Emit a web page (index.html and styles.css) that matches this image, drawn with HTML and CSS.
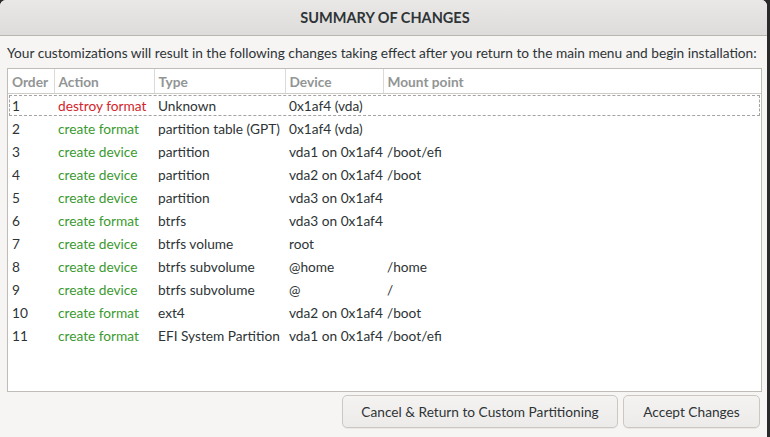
FILE: index.html
```html
<!DOCTYPE html>
<html>
<head>
<meta charset="utf-8">
<link rel="stylesheet" href="styles.css">
</head>
<body>
<div class="dialog">
  <div class="titlebar">SUMMARY OF CHANGES</div>
  <div class="content">
    <p class="intro">Your customizations will result in the following changes taking effect after you return to the main menu and begin installation:</p>
    <div class="frame">
      <table class="changes">
        <colgroup>
          <col class="c-order"><col class="c-action"><col class="c-type"><col class="c-device"><col>
        </colgroup>
        <thead>
          <tr><th>Order</th><th>Action</th><th>Type</th><th>Device</th><th class="last">Mount point</th></tr>
        </thead>
        <tbody>
          <tr class="focused"><td>1</td><td class="destroy">destroy format</td><td>Unknown</td><td>0x1af4 (vda)</td><td></td></tr>
          <tr><td>2</td><td class="create">create format</td><td>partition table (GPT)</td><td>0x1af4 (vda)</td><td></td></tr>
          <tr><td>3</td><td class="create">create device</td><td>partition</td><td>vda1 on 0x1af4</td><td>/boot/efi</td></tr>
          <tr><td>4</td><td class="create">create device</td><td>partition</td><td>vda2 on 0x1af4</td><td>/boot</td></tr>
          <tr><td>5</td><td class="create">create device</td><td>partition</td><td>vda3 on 0x1af4</td><td></td></tr>
          <tr><td>6</td><td class="create">create format</td><td>btrfs</td><td>vda3 on 0x1af4</td><td></td></tr>
          <tr><td>7</td><td class="create">create device</td><td>btrfs volume</td><td>root</td><td></td></tr>
          <tr><td>8</td><td class="create">create device</td><td>btrfs subvolume</td><td>@home</td><td>/home</td></tr>
          <tr><td>9</td><td class="create">create device</td><td>btrfs subvolume</td><td>@</td><td>/</td></tr>
          <tr><td>10</td><td class="create">create format</td><td>ext4</td><td>vda2 on 0x1af4</td><td>/boot</td></tr>
          <tr><td>11</td><td class="create">create format</td><td>EFI System Partition</td><td>vda1 on 0x1af4</td><td>/boot/efi</td></tr>
        </tbody>
      </table>
    </div>
    <div class="buttons">
      <button class="btn btn-cancel">Cancel &amp; Return to Custom Partitioning</button>
      <button class="btn btn-accept">Accept Changes</button>
    </div>
  </div>
</div>
</body>
</html>
```

FILE: styles.css
```css
html, body {
  margin: 0;
  padding: 0;
  width: 770px;
  height: 437px;
  overflow: hidden;
  background: #2a2a2a;
}
body {
  font-family: "Lato", "Noto Sans", sans-serif;
  font-size: 13.7px;
  color: #2e3436;
}
.dialog {
  width: 767px;
  height: 437px;
  background: #f6f5f4;
  border-radius: 6px 6px 0 0;
  overflow: hidden;
  display: flex;
  flex-direction: column;
}
.titlebar {
  height: 36px;
  flex: none;
  box-sizing: border-box;
  border-bottom: 1px solid #b9b5b0;
  background: linear-gradient(#e9e8e7, #dedcda);
  display: flex;
  align-items: center;
  justify-content: center;
  font-weight: bold;
  font-size: 14.5px;
  color: #2e3436;
  padding-left: 3px;
}
.content {
  padding: 7px 5px 0 7px;
  display: flex;
  flex-direction: column;
}
.intro {
  margin: 0;
  height: 25px;
  line-height: 20px;
  white-space: nowrap;
}
.frame {
  width: 755px;
  height: 324px;
  box-sizing: border-box;
  border: 1px solid #c0bcb7;
  background: #ffffff;
}
.changes {
  border-collapse: collapse;
  table-layout: fixed;
  width: 100%;
}
.c-order { width: 46px; }
.c-action { width: 100px; }
.c-type { width: 131px; }
.c-device { width: 98px; }
.changes th {
  height: 24px;
  padding: 0 0 0 4px;
  text-align: left;
  font-weight: bold;
  color: #929595;
  border-right: 1px solid #dcdad7;
  border-bottom: 1px solid #cfccc8;
  white-space: nowrap;
}
.changes th.last { border-right: none; }
.changes td {
  height: 23px;
  padding: 0 0 0 4px;
  white-space: nowrap;
  overflow: visible;
}
.changes tr.focused {
  outline: 1px dashed #a4a4a4;
  outline-offset: -2px;
}
.destroy { color: #d3242b; }
.create { color: #3b9a30; }
.buttons {
  display: flex;
  justify-content: flex-end;
  gap: 5px;
  padding: 3px 2px 0 0;
}
.btn {
  height: 33px;
  box-sizing: border-box;
  border: 1px solid #cdc7c2;
  border-radius: 5px;
  background: linear-gradient(#f4f3f2, #edebe9);
  font-family: inherit;
  font-size: 13.7px;
  color: #2e3436;
  padding: 0 8px;
  white-space: nowrap;
  box-shadow: 0 1px 0 rgba(0,0,0,0.05);
}
.btn-cancel { width: 276px; }
.btn-accept { width: 137px; }
```
